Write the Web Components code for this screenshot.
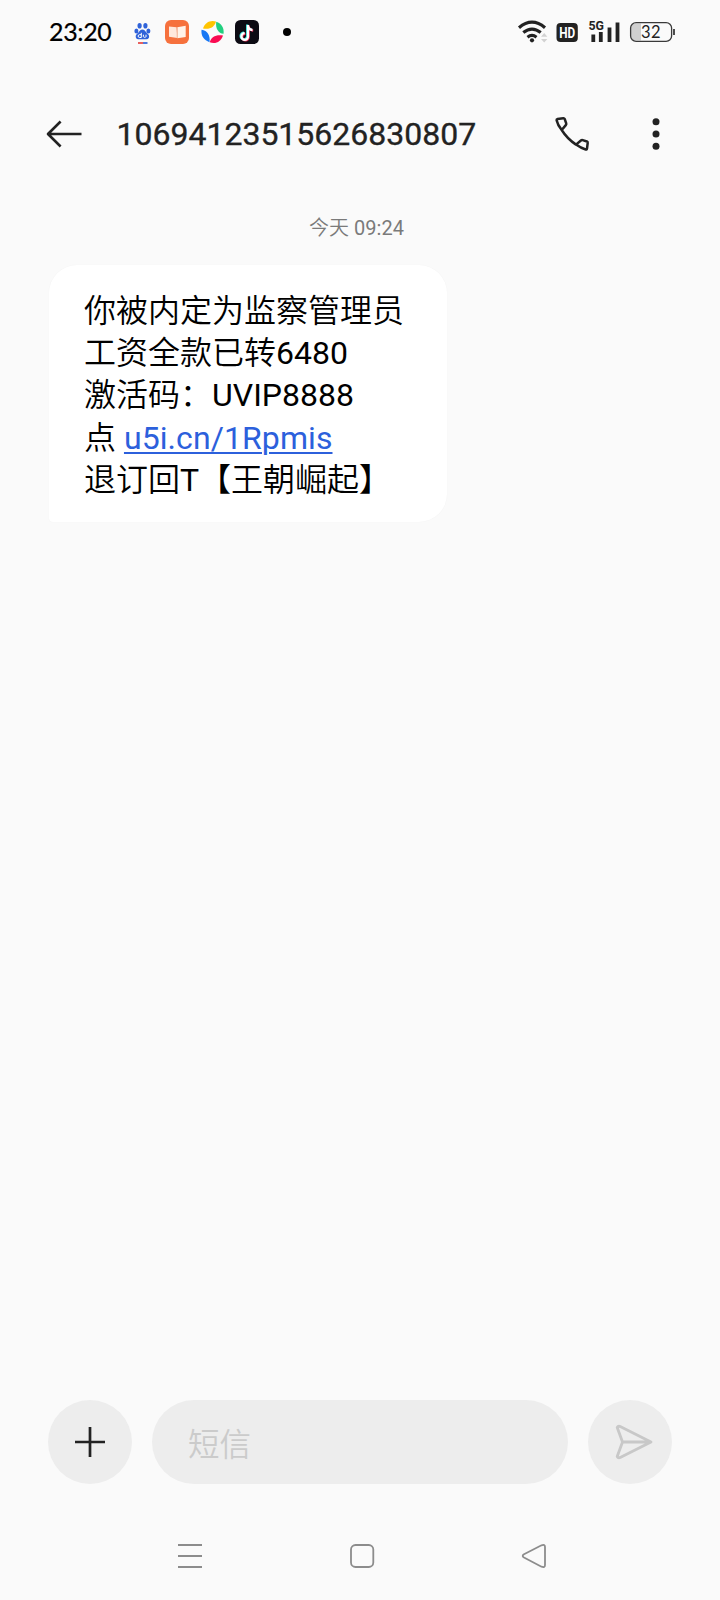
<!DOCTYPE html>
<html lang="zh-CN">
<head>
<meta charset="utf-8">
<title>短信</title>
<style>
html,body{margin:0;height:100%;background:#fafafa}
body{font-family:Roboto,"Noto Sans CJK SC",sans-serif;color:#000}
</style>
</head>
<body>
<sms-app></sms-app>
<script>
function define(name, html) {
  const t = document.createElement('template');
  t.innerHTML = html;
  customElements.define(name, class extends HTMLElement {
    constructor() {
      super();
      this.attachShadow({mode: 'open'}).appendChild(t.content.cloneNode(true));
    }
  });
}

define('status-bar', `
<style>
:host{display:flex;height:64px;box-sizing:border-box;padding:0 45px 0 48px;align-items:center;justify-content:space-between}
svg{display:block}
.left,.right{display:flex;align-items:center}
.time{font:400 25px/32px Lato,sans-serif;letter-spacing:-.35px;-webkit-text-stroke:.2px #000;width:84px;padding-left:1px;box-sizing:border-box;white-space:nowrap;margin:-2px 1px 0 0}
</style>
<div class="left">
  <div class="time">23:20</div>
  <svg width="160" height="32" viewBox="133 16 160 32">
    <g fill="#2f62d9">
      <ellipse cx="139.6" cy="25.8" rx="2.1" ry="2.8"/><ellipse cx="145.4" cy="25.8" rx="2.1" ry="2.8"/>
      <ellipse cx="136.4" cy="31" rx="2" ry="2.6"/><ellipse cx="148.4" cy="31" rx="2" ry="2.6"/>
      <path d="M142.4 29.6c2 0 2.9 1.6 4 2.9 1.4 1.4 3 2.3 2.7 4.4-.3 2.2-2.2 2.4-3.7 2.4h-6c-1.500 0-3.400-.2-3.700-2.400-.3-2.100 1.300-3 2.700-4.400 1.100-1.300 2-2.900 4-2.900z"/>
    </g>
    <path d="M141.300 32.800v4.700h-2c-1.500 0-1.500-2.800 0-2.800h2M143.400 34.700v2c0 .8 2.600.8 2.600 0v-2" fill="none" stroke="#fff" stroke-width="1"/>
    <path d="M138 43h5" stroke="#e34442" stroke-width="1.700"/><path d="M143 43h4.500" stroke="#2f62d9" stroke-width="1.700"/>
    <rect x="165" y="20" width="24" height="24" rx="6" fill="#f6713d"/>
    <path d="M169 26.500l7.500.7.900 10.800-8.400-1.300z" fill="#ffe8dc"/><path d="M177.300 27.200l8.400-1.500v11.200l-8.400 1.400z" fill="#fff3e9"/>
    <path d="M177.200 27v11" stroke="#efb69c" stroke-width=".9"/>
    <path d="M203 28.500C205 22.300 210.500 19.600 216 21.500c-1.500 5.500-6 8.300-13 7z" fill="#ffc400"/>
    <path d="M216.200 21.800c5.500 1.800 7.900 6 7.400 12-5.500-.4-8.200-5.300-7.400-12z" fill="#22d080"/>
    <path d="M223 35.500c-2 6.300-7.500 9-13.300 6.800 1.500-5.500 6.300-8 13.300-6.800z" fill="#fa0c52"/>
    <path d="M209.500 42.200c-5.500-1.800-8.700-6.200-8-12.400 6 .6 8.900 5.600 8 12.400z" fill="#1878f4"/>
    <rect x="235" y="20" width="24" height="24" rx="5.500" fill="#0c0b13"/>
    <g fill="none" stroke-width="2.300">
      <path d="M248 25v11.500a3.300 3.300 0 1 1-3.300-3.300M248 26c.5 2.400 2 3.800 4.500 4" transform="translate(-.8 -.6)" stroke="#35e3dd"/>
      <path d="M248 25v11.500a3.300 3.300 0 1 1-3.300-3.300M248 26c.5 2.400 2 3.800 4.500 4" transform="translate(.7 .6)" stroke="#f22a55"/>
      <path d="M248 25v11.500a3.300 3.300 0 1 1-3.300-3.300M248 26c.5 2.400 2 3.800 4.500 4" stroke="#fff"/>
    </g>
    <circle cx="287" cy="32" r="4" fill="#000"/>
  </svg>
</div>
<div class="right">
  <svg width="160" height="32" viewBox="515 16 160 32">
    <g fill="none" stroke="#222" stroke-width="3.200">
      <path d="M519 27.700q13-11 26 0"/><path d="M523.300 32.600q8.700-7 17.400 0"/><path d="M527.500 37.200q4.500-3.500 9 0"/>
    </g>
    <circle cx="532" cy="40.300" r="2.100" fill="#222"/>
    <path d="M541 36.700l3.200-3.600 3.200 3.600zM541 38.900l3.200 3.600 3.200-3.600z" fill="#d2d2d2"/>
    <rect x="556.500" y="23" width="21.300" height="19" rx="4" fill="#222"/>
    <text x="567.200" y="37.900" text-anchor="middle" font-family="Roboto" font-weight="700" font-size="15" textLength="16" lengthAdjust="spacingAndGlyphs" fill="#fff">HD</text>
    <text x="588.400" y="30.300" font-family="Roboto" font-weight="700" font-size="13.500" textLength="15.500" lengthAdjust="spacingAndGlyphs" fill="#222">5G</text>
    <path d="M593.300 34.500v7.500M600.800 32v10M609.500 27.500v14.500M617.500 22.500v19.500" stroke="#222" stroke-width="3.800" fill="none"/>
    <path d="M635.500 23.500H641v17h-5.500a4.500 4.500 0 0 1-4.500-4.500v-8a4.500 4.500 0 0 1 4.500-4.500z" fill="#d0d0d0"/>
    <rect x="630.600" y="22.600" width="41" height="18.800" rx="5.500" fill="none" stroke="#3a3a3a" stroke-width="1.300"/>
    <path d="M674 29v6" stroke="#3a3a3a" stroke-width="1.800"/>
    <text x="650.800" y="38" text-anchor="middle" font-family="Lato" font-size="16.500" textLength="19.500" fill="#222">32</text>
  </svg>
</div>`);

define('chat-header', `
<style>
:host{display:flex;height:140px;box-sizing:border-box;padding:0 49px 0 45px;align-items:center}
svg{display:block;flex:none}
h1{margin:-1px 0 0 33.500px;font:400 32px/40px Roboto,sans-serif;-webkit-text-stroke:.35px #222;color:#222;flex:1}
.more{margin-left:50px}
</style>
<svg width="38" height="32" viewBox="45 118 38 32" fill="none" stroke="#222" stroke-width="2.600"><path d="M81.500 134H48M60.600 121.500L48 134l12.600 12.500" stroke-linejoin="round"/></svg>
<h1><slot></slot></h1>
<svg width="38" height="38" viewBox="553 115 38 38" fill="none" stroke="#222" stroke-width="2.500" stroke-linejoin="round"><path d="M556.600 120.200Q556.400 119.100 557.500 118.900L563.300 118.200Q564.300 118.100 564.700 119L566.200 123.300Q566.500 124.300 565.800 125.100L561.700 130C559 126.600 557.300 123.600 556.600 120.200zM561.700 130C565.500 136 570.300 140.800 576 144.600M576 144.600L580.900 140.500Q581.700 139.800 582.700 140.100L586.900 141.500Q587.800 141.900 587.700 142.900L587 148.600Q586.800 149.800 585.700 149.500C582.300 148.600 579.200 146.900 576 144.600z"/></svg>
<svg class="more" width="30" height="38" viewBox="641 115 30 38" fill="#222"><circle cx="656" cy="121.700" r="3.500"/><circle cx="656" cy="134" r="3.500"/><circle cx="656" cy="146.300" r="3.500"/></svg>`);

define('time-label', `
<style>:host{display:block;margin:10px 7px 0 0;text-align:center;font:400 20px/28px Roboto,"Noto Sans CJK SC DemiLight","Noto Sans CJK SC",sans-serif;color:#7a7a7a}</style>
<slot></slot>`);

define('message-bubble', `
<style>
:host{display:block;width:398px;height:257px;box-sizing:border-box;margin:23px 0 0 49px;padding:25px 0 0 35px;background:#fff;border-radius:28px 28px 28px 4px;font:400 32px/42.200px Roboto,"Noto Sans CJK SC DemiLight","Noto Sans CJK SC",sans-serif;color:#000;box-shadow:0 0 1px #eee}
div{white-space:pre-line}
::slotted(a){color:#2c60dc;letter-spacing:.08px;text-decoration:underline;text-decoration-thickness:1.500px;text-underline-offset:3px}
</style><div><slot></slot></div>`);

define('compose-bar', `
<style>
:host{display:flex;gap:20px;padding:0 48px}
div{height:84px;border-radius:42px;background:#ededed;display:flex;align-items:center;box-sizing:border-box}
.c{width:84px;justify-content:center;flex:none}
.in{flex:1;padding:0 36px;font:350 31.500px/42px "Noto Sans CJK SC",sans-serif;color:#cbcbcb}
</style>
<div class="c"><svg width="30" height="30" viewBox="0 0 30 30"><path d="M15 0v30M0 15h30" stroke="#222" stroke-width="2.700"/></svg></div>
<div class="in"><slot></slot></div>
<div class="c"><svg width="84" height="84" viewBox="588 1400 84 84" fill="none" stroke="#c8c8c8" stroke-width="2.800" stroke-linejoin="round"><path d="M617.200 1427.500q1-2 3.500-.8L651 1442l-30.300 15.300q-2.500 1.200-3.500-.8l5.300-14.500zM622.500 1442H651"/></svg></div>`);

define('nav-bar', `
<style>:host{display:flex;justify-content:space-between;padding:0 172px 0 176px}svg{display:block}</style>
<svg width="28" height="28" viewBox="176 1542 28 28" fill="none" stroke="#8c8c8c" stroke-width="2"><path d="M178 1545h24M178 1556h24M178 1567h24"/></svg>
<svg width="28" height="28" viewBox="348 1542 28 28" fill="none" stroke="#8c8c8c" stroke-width="1.800"><rect x="351" y="1545" width="22.300" height="22" rx="4.500"/></svg>
<svg width="28" height="28" viewBox="520 1542 28 28" fill="none" stroke="#8c8c8c" stroke-width="1.800"><path d="M524 1554.300L541.500 1545.300q3.500-1.200 3.500 1.700v18q0 2.900-3.500 1.700L524 1557.500q-2.600-1.600 0-3.200z"/></svg>`);

define('sms-app', `
<style>
:host{display:flex;flex-direction:column;width:720px;height:1600px;background:#fafafa;overflow:hidden}
main{flex:1}
compose-bar{margin-bottom:58px}nav-bar{margin-bottom:30px}
</style>
<status-bar></status-bar>
<chat-header>10694123515626830807</chat-header>
<main>
<time-label>今天 09:24</time-label>
<message-bubble>你被内定为监察管理员
工资全款已转6480
激活码：UVIP8888
点 <a>u5i.cn/1Rpmis</a>
退订回T【王朝崛起】</message-bubble>
</main>
<compose-bar>短信</compose-bar>
<nav-bar></nav-bar>`);
</script>
</body>
</html>
